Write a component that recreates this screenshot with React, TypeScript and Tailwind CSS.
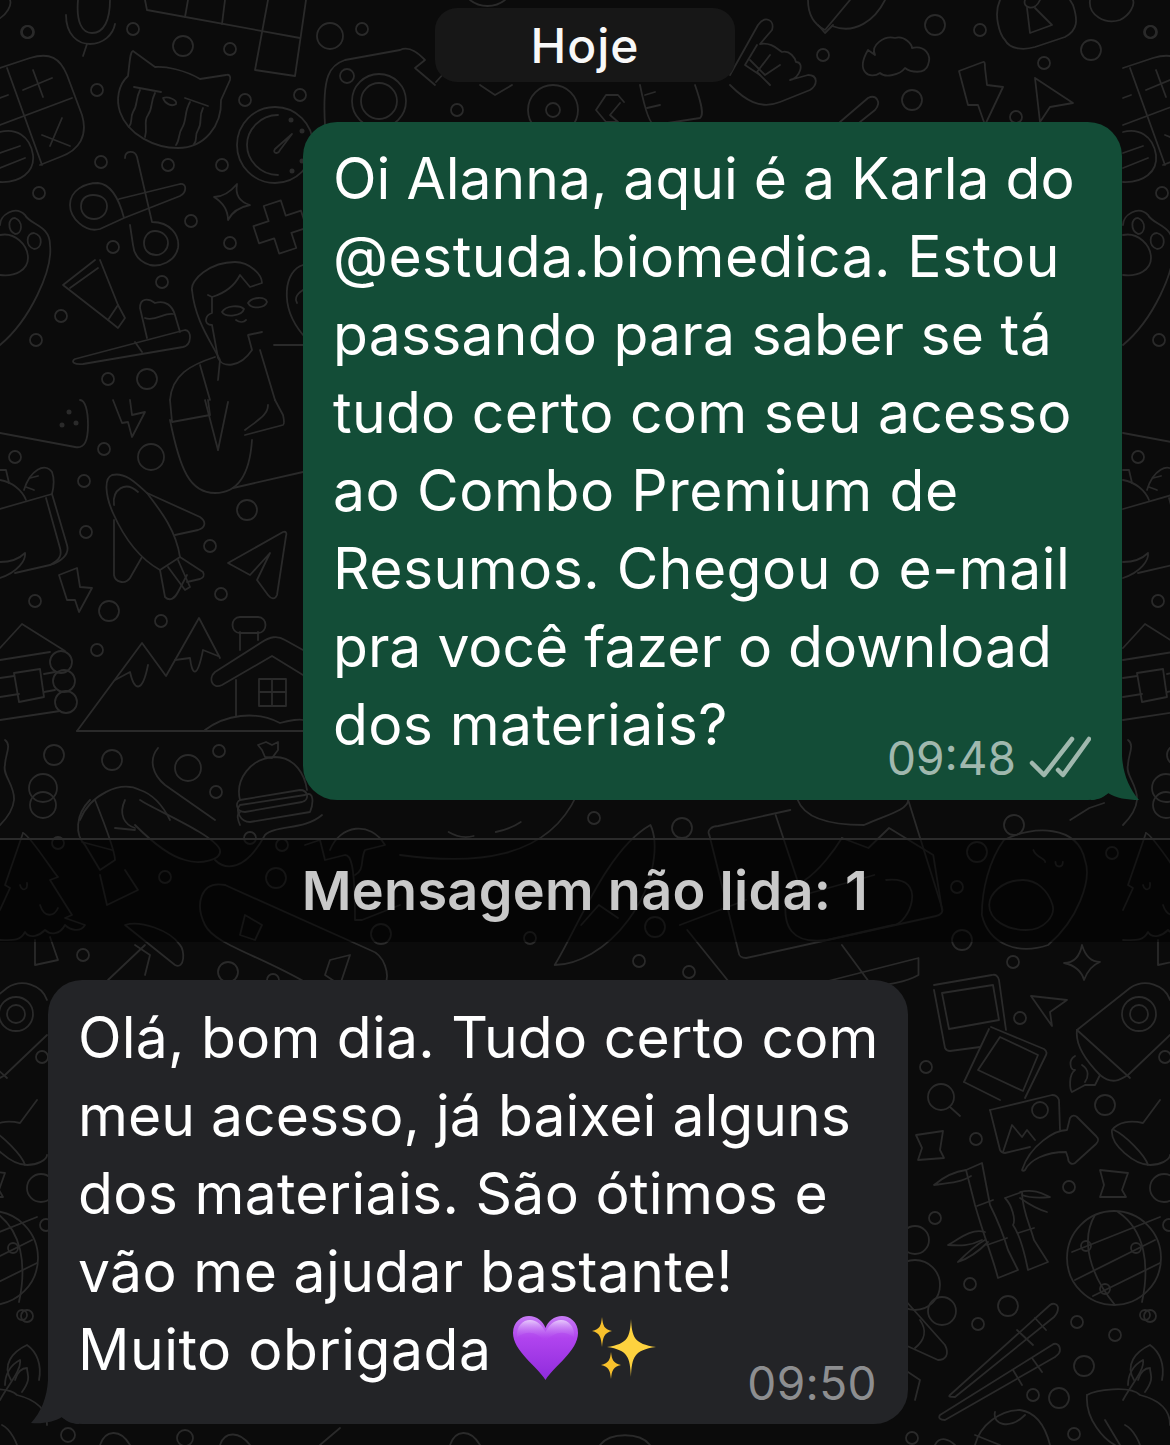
const circles: number[][] = [
  [28, 32, 6], [133, 29, 6], [183, 46, 10], [230, 49, 6], [97, 90, 6], [101, 162, 6], [39, 193, 6], [168, 165, 6], [222, 165, 6],
  [191, 221, 6], [113, 247, 6], [230, 243, 6], [245, 100, 6], [300, 95, 6], [162, 282, 6], [61, 316, 6], [36, 340, 6], [108, 379, 6], [147, 379, 10],
  [330, 36, 13], [362, 29, 6], [379, 101, 27], [379, 101, 18], [347, 76, 7], [457, 110, 6], [553, 110, 25], [553, 110, 7],
  [823, 55, 6], [935, 25, 10], [980, 30, 6], [912, 100, 10], [1016, 117, 6], [1091, 50, 10], [1044, 63, 6], [1150, 32, 6],
  [104, 449, 6], [151, 457, 13], [84, 481, 6], [86, 532, 6], [247, 510, 10], [210, 546, 6], [221, 594, 6], [35, 601, 6], [109, 611, 10],
  [161, 621, 6], [97, 650, 6], [54, 755, 10], [112, 760, 10], [219, 751, 6], [188, 768, 13], [216, 792, 6], [43, 788, 14], [15, 457, 6],
  [43, 805, 13], [58, 843, 6], [165, 877, 6], [276, 878, 10], [83, 955, 6], [228, 972, 10], [250, 838, 6], [282, 845, 6], [381, 934, 10], [273, 980, 6],
  [594, 818, 6], [682, 828, 10], [977, 852, 10], [1014, 825, 10], [1112, 853, 6], [957, 887, 6], [655, 927, 10], [530, 938, 6], [639, 961, 6], [689, 972, 6], [962, 940, 10],
  [1013, 962, 6], [1020, 1018, 6], [926, 1067, 6], [976, 1139, 6], [1069, 1187, 6], [935, 1218, 6], [970, 1284, 6], [1008, 1306, 10], [978, 1324, 6],
  [1077, 1322, 6], [1115, 1335, 6], [1150, 1316, 6], [1084, 1366, 10], [1033, 1395, 6], [1059, 1398, 10], [1074, 1434, 6], [912, 1438, 6],
  [1105, 1105, 10], [1164, 1188, 14], [1165, 1057, 6], [1169, 1225, 6], [941, 1097, 13], [1040, 1110, 8], [1139, 1014, 17], [1139, 1014, 9],
  [1114, 1258, 47], [1086, 1246, 5], [1136, 1248, 5], [1105, 1289, 5], [915, 1240, 14], [942, 1311, 14], [915, 1285, 25], [22, 1315, 5],
  [68, 1435, 7], [185, 1438, 8],
]

// drawn from a crop that was squeezed sideways, so this group gets stretched back on x
const bandPaths: string[] = [
  'M400 855 C450 865 500 860 520 795', 'M433 832 C440 838 445 838 450 836', 'M465 832 C472 830 478 826 482 822', 'M505 965 C520 930 540 850 570 825 C575 840 575 880 555 920 C540 950 520 965 505 965Z', 'M523 925 L535 905 L548 918', 'M590 925 L635 900', 'M595 930 L625 985',
  'M610 835 C608 830 612 826 616 826 L665 810', 'M745 800 L768 908 C769 912 767 915 764 916 L635 958 C632 958 630 956 630 953 L610 835', 'M655 815 L672 890', 'M670 800 C675 820 695 825 715 825 C730 815 745 810 745 800', 'M700 838 C695 850 685 870 675 880', 'M700 838 L718 848 L732 828 L762 855 L768 910',
  'M730 880 C760 875 745 925 735 925 L690 940 C665 945 660 925 662 900 L722 875', 'M700 945 L720 985', 'M680 985 L752 958 L752 975 C740 985 725 985 700 990',
  'M810 840 C830 825 860 825 865 860 C870 880 860 920 840 945 C820 955 800 945 795 915 C795 890 800 860 810 840', 'M823 880 C808 880 800 895 800 905 C800 920 812 930 825 930 C838 930 845 915 843 905 C840 890 832 880 823 880Z', 'M830 850 C832 858 838 858 838 862', 'M845 862 C845 868 850 868 850 862', 'M855 820 L868 808 L878 803',
]

const paths: string[] = [
  // mic, grid
  'M78 0 C76 22 82 33 92 33 C104 33 110 20 110 0', 'M66 15 C66 35 78 44 90 44 C103 44 113 35 115 24', 'M87 44 L83 56',
  'M145 0 L147 10 L300 38', 'M188 0 L185 17', 'M225 0 L222 24', 'M268 0 L255 70 L295 76 L306 0',
  // cat
  'M133 51 C130 52 130 60 128 76 C118 85 116 100 120 112 C128 135 155 148 178 148 C205 148 222 125 221 100 L230 80 C231 76 229 74 226 75 L200 79 C185 70 165 66 155 67 Z',
  'M134 87 L161 92', 'M185 98 L208 106', 'M140 90 C135 100 138 105 133 112 C130 118 133 122 129 127', 'M155 93 C150 103 153 108 148 115 C143 122 148 128 145 137',
  'M190 102 C184 112 187 120 182 128 C178 134 180 140 176 145', 'M203 108 C198 118 203 122 198 130 C194 136 198 140 194 144', 'M163 98 C168 96 178 100 176 104 C172 107 165 104 163 98',
  // calculator
  'M0 68 L30 58 C50 52 60 58 67 75 L82 115 C88 135 80 150 60 157 L40 165', 'M7 68 L42 165', 'M0 125 L72 98', 'M23 90 L52 78', 'M33 70 L43 97', 'M42 135 L70 146', 'M50 146 L62 118', 'M0 98 L8 95',
  'M0 132 C15 128 30 135 33 155 C35 172 20 183 0 182', 'M0 153 L20 146', 'M0 168 L25 158',
  // gauge
  'M278 115 C260 115 247 130 247 145 C247 160 260 175 278 175', 'M292 134 L275 149 C272 153 278 155 280 150 Z',
  // scissors
  'M119 199 L180 184 C187 183 187 192 180 196 L124 218 L100 229 C85 233 70 218 70 205 C70 190 85 183 98 183 C110 184 118 195 124 218', 'M125 158 C125 150 135 150 137 157 L152 222 C170 222 180 235 178 248 C175 262 160 267 150 265 C140 262 134 255 133 245 L130 225',
  'M93 195 C85 195 81 200 81 206 C81 214 87 219 94 219 C102 219 107 213 107 206 C107 199 101 195 93 195Z', 'M155 231 C148 231 144 237 144 243 C144 251 150 255 156 255 C163 255 168 249 168 243 C168 236 162 231 155 231Z',
  'M214 197 C225 197 232 190 237 184 C235 195 240 202 250 205 C240 207 232 212 228 220 C228 210 222 202 214 197Z',
  // paw
  'M0 225 C0 215 15 205 25 215 C30 225 50 225 50 245 C53 270 30 320 0 345', 'M15 218 C8 218 7 230 15 234 C22 234 24 222 15 218Z', 'M34 233 C26 233 25 246 34 249 C42 249 44 236 34 233Z', 'M0 235 C15 232 28 245 28 258 C28 270 15 277 0 275',
  // tube, brush
  'M95 260 L63 285 L108 320 L118 305 L100 260', 'M70 288 L98 268', 'M108 320 L118 328 L125 318 L118 305',
  'M75 359 L185 330 C192 330 192 345 183 347 L83 364 C75 365 70 362 75 359Z', 'M135 342 L142 352', 'M147 338 L140 308 C140 298 148 298 155 303 C165 300 172 305 175 315 L180 332', 'M145 318 C155 322 165 312 173 314',
  // person
  'M192 290 C190 280 210 262 235 262 C250 262 262 275 262 283 L250 287 L240 275 C235 285 225 293 212 297 L208 295', 'M192 290 C195 320 210 340 220 360 L218 380',
  'M212 297 L212 313 C205 315 203 325 212 325 L218 358 C222 368 240 368 252 350 L248 335 L262 332', 'M222 312 C226 305 240 305 244 309 C242 316 226 318 222 312Z', 'M248 303 C252 297 265 296 267 302 C265 308 252 310 248 303Z', 'M236 320 C240 323 244 322 246 320',
  'M215 357 C190 365 172 375 170 400', 'M200 365 L210 400', 'M260 350 L275 400', 'M274 345 L303 345', 'M303 265 C285 270 278 305 303 335', 'M303 290 C295 295 295 300 297 303',
  // top middle
  'M325 125 C322 75 330 65 345 60 L400 50 C410 45 420 55 425 60 L415 68 L435 85', 'M436 82 L445 72', 'M480 85 L495 95 L512 85', 'M620 103 L610 115 L618 122 L606 122 L596 110 L606 95 L618 95 L624 102',
  'M640 85 C645 110 650 125 655 125 L700 118 C704 115 702 105 695 85', 'M645 95 L655 92', 'M647 108 L660 105', 'M470 0 C480 8 495 8 505 0',
  // shaka, balloon, cloud, lock
  'M730 75 L758 25 C765 15 775 20 772 30 L760 44 C772 42 778 50 782 52 C790 50 795 58 796 62 C805 62 800 78 790 80 L808 75 C818 75 818 85 810 90 L780 102 C760 110 745 100 730 85', 'M750 60 L765 75 L780 65', 'M757 45 L745 65 L760 75', 'M770 55 L757 72 L770 85',
  'M808 0 C808 15 815 25 825 30 L850 0', 'M818 25 L825 33 L833 25', 'M832 26 C855 35 875 20 885 0',
  'M875 55 C870 45 885 35 895 38 C905 35 912 45 912 48 C925 45 932 55 928 65 C925 75 910 72 905 68 C900 75 885 78 880 73 C870 80 855 72 868 50 Z',
  'M1000 0 C993 15 1000 35 1005 40 C1010 50 1025 50 1035 47 L1065 37 C1078 30 1078 20 1073 5 L1070 0', 'M1027 8 L1030 33 L1052 25 L1035 8', 'M1025 0 C1022 8 1035 12 1040 0',
  'M1090 0 C1088 15 1105 25 1120 20 C1130 15 1135 5 1133 0',
  'M959 71 L983 62 C985 61 985 65 985 68 L987 85 L1003 87 L985 125 L978 105 L968 105 Z', 'M1035 78 L1073 103 L1050 107 L1040 122 Z',
  'M840 122 L868 98 C876 94 882 102 875 110 L860 122',
  // row 400-800
  'M0 433 L75 447 C85 449 88 440 88 425 C88 410 85 400 80 400', 'M113 400 L122 423 L128 422 L132 437 L145 412 L132 415 L130 400',
  'M112 475 C104 478 105 495 113 513 C125 540 142 560 160 570 L180 557 C176 530 160 510 147 493 C135 482 125 472 112 475Z', 'M114 505 C112 490 125 480 138 492', 'M147 493 L200 517 C207 522 205 528 198 530 L175 535', 'M114 520 L114 575 C115 582 125 585 130 578 L142 557',
  'M160 570 L165 597 C170 602 175 598 178 592 L187 575', 'M168 567 L185 590 L190 587 L178 560', 'M180 557 L203 572 C205 576 203 578 200 579 L187 582',
  'M228 563 L283 532 C286 531 287 533 286 536 L277 595 C275 600 271 599 268 595 L257 580 L270 553 L250 575 Z', 'M59 575 L77 568 L80 587 L92 588 L79 612 L75 600 L67 600 Z',
  'M77 731 L142 643 L166 676 L199 618 L220 658', 'M77 731 L303 731', 'M115 680 L130 672 C134 690 142 695 148 665', 'M175 660 L190 658 C192 675 197 680 203 650 L218 656',
  'M303 650 L285 640 C277 635 270 637 262 642 L215 672 C208 678 212 690 222 685 L272 656 L303 675', 'M236 680 L236 716', 'M259 679 H286 V706 H259 Z', 'M272 679 V706', 'M259 692 H286', 'M240 650 L240 632', 'M258 640 L258 632',
  'M240 617 H258 C268 617 268 633 258 633 H240 C230 633 230 617 240 617Z', 'M205 730 C225 715 255 710 280 723 C290 720 300 719 303 720',
  'M0 648 L22 624 L65 651', 'M0 660 L50 652', 'M0 720 L60 711', 'M14 673 L40 669 L44 697 L19 702 Z', 'M0 678 L14 676', 'M0 697 L19 694', 'M44 674 L55 672', 'M44 692 L55 690',
  'M61 651 C55 651 50 656 50 662 C50 668 55 673 61 673 C67 673 72 668 72 662 C72 656 67 651 61 651Z', 'M64 670 C58 670 53 675 53 681 C53 687 58 692 64 692 C70 692 75 687 75 681 C75 675 70 670 64 670Z', 'M66 691 C60 691 55 696 55 702 C55 708 60 713 66 713 C72 713 77 708 77 702 C77 696 72 691 66 691Z',
  'M0 509 L52 494 L67 545 C70 555 60 562 50 565 L15 573', 'M46 498 L60 548 C62 555 60 560 50 565', 'M24 490 C30 470 45 462 52 472 C55 480 53 490 52 494', 'M30 478 L38 476', 'M26 487 L34 490', 'M0 562 C12 562 20 558 25 553 C26 560 18 572 0 578', 'M0 480 C12 482 22 490 26 500', 'M0 470 L6 470 L9 483',
  'M170 420 C180 470 190 493 215 493 C240 493 250 470 252 440', 'M170 400 L172 422 L210 415 L208 400', 'M218 450 L228 402', 'M218 450 L205 400', 'M245 435 L283 425 C285 424 284 420 283 415 L275 400', 'M233 488 L303 472', 'M245 430 C258 420 268 415 268 405',
  'M240 800 C235 780 250 758 275 757 C295 757 305 775 307 790', 'M240 800 L300 790 C308 790 310 800 302 802 L245 812 C236 812 235 802 240 800Z', 'M240 812 C236 815 238 820 240 825', 'M262 750 L258 745 L266 742 L272 745 L278 742 L278 750 L272 758 L265 757 Z',
  'M80 820 C90 795 120 780 140 790 C155 795 165 810 170 820', 'M158 748 C148 760 153 775 165 785 L215 820', 'M5 740 C12 745 5 755 5 765 C2 775 15 785 14 800 C13 810 5 820 0 825',
  // band left
  'M23 833 C30 835 55 875 58 877 L50 880 L72 915 L65 918 L85 925 C80 933 70 930 65 925 C60 935 50 935 45 930 C40 935 30 940 25 932 C20 942 10 940 0 940', 'M23 833 L5 885 L10 888 L0 910', 'M35 940 L35 965 L58 960 L50 937', 'M20 885 C22 892 28 890 27 883', 'M40 905 C45 920 55 915 58 908',
  'M90 800 C75 815 75 835 85 845 L100 870 L115 860 C115 850 95 800 95 800', 'M100 875 L107 905 L138 890 L125 870', 'M82 842 L112 850', 'M115 828 L135 830', 'M125 800 C118 815 125 825 135 828',
  'M225 885 C200 880 195 905 205 925 C215 945 260 955 310 985', 'M225 885 L370 950 C385 955 390 975 385 985', 'M245 915 L262 925 L255 940 L240 935 Z', 'M330 960 L350 955 L340 985 L325 975 Z',
  'M140 800 C155 810 215 835 220 850 C222 860 200 865 185 860 C165 855 140 830 135 825', 'M215 860 C225 870 245 872 265 835 C275 825 305 830 322 815', 'M240 805 L305 795 C315 790 313 805 310 812 L250 822 C240 822 235 810 240 805Z',
  'M125 925 L175 965 C185 970 185 950 180 945 C170 930 140 920 125 925Z', 'M135 945 L150 955 L145 975', 'M108 980 L145 945',
  'M305 845 L320 840 L325 860 L345 855 C350 855 355 860 355 920 L362 920 L400 905', 'M330 850 C340 825 370 820 385 845 L365 850 C360 860 365 870 355 875',
  // right side
  'M1064 963 C1075 963 1080 955 1082 945 C1085 955 1090 962 1100 962 C1092 965 1087 972 1084 980 C1082 972 1075 965 1064 963Z',
  'M934 985 L992 975 C996 974 998 976 999 980 L1006 1030', 'M934 990 L945 1048 C946 1050 948 1051 950 1051 L980 1047', 'M942 993 L993 985 L999 1020 L949 1029 Z',
  'M991 1027 L1044 1049 C1047 1051 1047 1053 1046 1055 L1025 1098', 'M964 1082 L989 1029', 'M964 1082 L1000 1100', 'M1000 1037 L1038 1055 L1023 1091 L978 1070 Z',
  'M990 1110 L1052 1095 C1056 1095 1058 1097 1059 1100 L1060 1130', 'M990 1110 L1000 1150 C1001 1152 1003 1153 1005 1153 L1030 1147', 'M1003 1152 L1012 1125 L1022 1137 L1027 1130 L1035 1140',
  'M1022 1170 C1030 1145 1055 1130 1067 1130 L1070 1118 C1072 1115 1075 1115 1077 1117 L1096 1136 C1099 1139 1099 1141 1096 1144 L1075 1163 C1072 1165 1068 1163 1068 1158 L1066 1152 C1045 1152 1030 1160 1025 1170 C1024 1171 1022 1171 1022 1170Z',
  'M1077 1030 L1130 988 C1145 978 1165 985 1170 1000', 'M1077 1030 C1075 1045 1085 1060 1100 1075 C1112 1085 1120 1080 1128 1075 L1170 1035', 'M1077 1030 L1130 1078',
  'M1075 1056 C1068 1060 1070 1070 1075 1070 C1068 1075 1070 1090 1072 1092 L1085 1085 L1095 1085 L1100 1075', 'M1082 1065 C1090 1070 1088 1078 1085 1082',
  'M1031 996 L1067 1000 L1050 1012 L1052 1026 Z', 'M950 1107 L960 1116', 'M916 1135 L943 1131 L940 1150 L944 1158 L918 1160 L922 1148 Z', 'M1100 1170 L1128 1173 L1122 1190 L1126 1197 L1100 1197 L1104 1185 Z',
  'M1160 1100 L1143 1123 C1130 1120 1118 1122 1112 1130 C1110 1145 1135 1165 1150 1165 C1160 1165 1170 1160 1170 1155', 'M1114 1130 C1125 1135 1145 1155 1148 1165',
  // bamboo
  'M966 1170 L982 1163 L990 1205 C1000 1225 1005 1240 1008 1250 L1018 1270 L998 1278 C992 1255 985 1240 975 1205 Z', 'M977 1206 L993 1200', 'M987 1245 L1007 1238', 'M966 1170 C950 1172 940 1180 934 1185 C950 1183 962 1182 971 1176',
  'M1005 1198 L1022 1192 C1022 1210 1030 1225 1034 1240 L1048 1262 L1028 1270 C1024 1250 1020 1235 1013 1225 C1016 1220 1012 1205 1005 1198Z', 'M1018 1233 L1034 1228', 'M1020 1192 C1035 1188 1045 1195 1050 1197 C1040 1198 1030 1198 1022 1195', 'M1020 1198 C1030 1205 1040 1210 1047 1212',
  'M985 1232 C970 1228 958 1240 948 1245 C960 1246 970 1246 982 1240', 'M985 1240 C975 1245 965 1255 958 1262 C970 1258 980 1250 988 1242',
  // globe
  'M1072 1252 L1160 1217', 'M1075 1280 L1155 1240', 'M1093 1296 L1160 1263', 'M1095 1215 C1080 1240 1090 1275 1115 1305', 'M1118 1212 C1145 1230 1150 1265 1142 1302',
  // chopsticks
  'M950 1395 L1050 1305 C1054 1302 1058 1305 1058 1308 C1058 1312 1056 1315 1054 1317 L955 1397 C950 1397 948 1397 950 1395Z', 'M1017 1330 L1033 1345', 'M1035 1318 L1046 1330', 'M940 1415 L1052 1345 C1056 1342 1060 1345 1060 1350 C1060 1354 1057 1355 1055 1357 L945 1420 C940 1420 938 1418 940 1415Z', 'M1013 1370 L1022 1385', 'M1032 1358 L1042 1372',
  // candle, flowers
  'M1134 1380 C1125 1365 1135 1352 1150 1345 C1160 1352 1165 1365 1162 1380', 'M1138 1380 C1140 1372 1145 1368 1150 1368 C1150 1375 1155 1378 1145 1392', 'M1087 1395 C1095 1390 1130 1385 1140 1395 C1160 1400 1170 1410 1170 1425', 'M1087 1395 C1085 1420 1105 1440 1115 1445', 'M1105 1420 L1120 1445', 'M1125 1425 C1135 1430 1140 1445 1140 1445',
  'M975 1445 C980 1425 1000 1410 1020 1410 C1035 1412 1045 1425 1050 1445', 'M995 1412 C992 1425 1010 1430 1025 1415', 'M975 1435 L1000 1445', 'M935 1445 C940 1435 950 1440 955 1445',
  'M905 1370 L920 1380 L915 1400', 'M905 1300 L945 1345 C950 1355 945 1360 938 1360 L905 1345', 'M920 1320 C927 1330 925 1340 915 1348',
  'M0 1400 C8 1385 22 1370 20 1360 C10 1365 5 1375 5 1385', 'M100 1445 C105 1430 120 1428 130 1445', 'M220 1445 C225 1430 240 1432 250 1445', 'M320 1445 L340 1428', 'M450 1445 C455 1430 470 1428 480 1445', 'M600 1445 C610 1432 640 1432 650 1445',
]

const Doodles = () => (
  <g>
    {circles.map(([cx, cy, r], i) => (
      <circle key={i} cx={cx} cy={cy} r={r} />
    ))}
    {paths.map((d, i) => (
      <path key={i} d={d} />
    ))}
    <g transform="translate(400 0) scale(1.473 1) translate(-400 0)">
      {bandPaths.map((d, i) => (
        <path key={i} d={d} vectorEffect="non-scaling-stroke" />
      ))}
    </g>
    <path d="M-9 -25h18v16h16v18h-16v16h-18v-16h-16v-18h16z" transform="translate(280 227) rotate(-18)" />
    {[[291, 120], [302, 131], [302, 161], [292, 171], [69, 412], [62, 425], [76, 423]].map(([cx, cy], i) => (
      <circle key={i} cx={cx} cy={cy} r={2.5} fill="#2a2a2a" stroke="none" />
    ))}
    <path d="M275 107 C296 107 313 124 313 145 C313 166 296 183 275 183 C254 183 237 166 237 145 C237 124 254 107 275 107Z" />
  </g>
)

const Wallpaper = () => (
  <svg className="absolute inset-0 h-full w-full fill-none stroke-[#2a2a2a] stroke-[1.8]" viewBox="0 0 1170 1445" strokeLinecap="round" strokeLinejoin="round">
    <g transform="translate(-1123 0)"><Doodles /></g>
    <Doodles />
    <g transform="translate(1123 0)"><Doodles /></g>
  </svg>
)

const Heart = () => (
  <svg className="ml-[21px] mt-[4px] h-[66px] w-[67px] shrink-0" viewBox="0 0 67 66">
    <defs>
      <linearGradient id="heart" x1="0" y1="0" x2="0" y2="1">
        <stop offset="0" stopColor="#c77bf5" />
        <stop offset="0.35" stopColor="#b044ee" />
        <stop offset="1" stopColor="#8f2bdc" />
      </linearGradient>
      <linearGradient id="shine" x1="0" y1="0" x2="0" y2="1">
        <stop offset="0" stopColor="#e6c8fc" />
        <stop offset="1" stopColor="#b044ee" stopOpacity="0" />
      </linearGradient>
    </defs>
    <path d="M33.5 65 C25 51 1 36 1 18 C1 7 9 1 17 1 C25 1 31 6 33.5 13 C36 6 42 1 50 1 C58 1 66 7 66 18 C66 36 42 51 33.5 65Z" fill="url(#heart)" />
    <path d="M5 22 C4 11 11 5 18 5 C25 5 30 10 33.5 17 C37 10 42 5 49 5 C56 5 63 11 62 22 C50 14 42 18 33.5 26 C25 18 17 14 5 22Z" fill="url(#shine)" />
  </svg>
)

const Sparkles = () => (
  <svg className="ml-[11px] mt-[6px] h-[64px] w-[66px] shrink-0" viewBox="0 0 66 64">
    <path d="M41 2 C42 20 44 27 66 30 C44 33 42 40 41 60 C40 40 38 33 17 30 C38 27 40 20 41 2Z" fill="#fdd23f" />
    <path d="M12 0 C13 9 14 12 22 14 C14 16 13 20 12 30 C11 20 10 16 2 14 C10 12 11 9 12 0Z" fill="#f7c02c" />
    <path d="M21 35 C22 43 23 46 31 48 C23 50 22 53 21 62 C20 53 19 50 11 48 C19 46 20 43 21 35Z" fill="#f7c02c" />
  </svg>
)

const sentLines = [
  { text: 'Oi Alanna, aqui é a Karla do', track: 'tracking-[0px]' },
  { text: '@estuda.biomedica. Estou', track: 'tracking-[0.42px]' },
  { text: 'passando para saber se tá', track: 'tracking-[0.22px]' },
  { text: 'tudo certo com seu acesso', track: 'tracking-[0.28px]' },
  { text: 'ao Combo Premium de', track: 'tracking-[0.58px]' },
  { text: 'Resumos. Chegou o e-mail', track: 'tracking-[0.46px]' },
  { text: 'pra você fazer o download', track: 'tracking-[0px]' },
  { text: 'dos materiais?', track: 'tracking-[0.36px]' },
]

const receivedLines = [
  { text: 'Olá, bom dia. Tudo certo com', track: 'tracking-[0.22px]' },
  { text: 'meu acesso, já baixei alguns', track: 'tracking-[0.04px]' },
  { text: 'dos materiais. São ótimos e', track: 'tracking-[0.3px]' },
  { text: 'vão me ajudar bastante!', track: 'tracking-[0.35px]' },
]

const App = () => {
  return (
    <div className="relative h-[1445px] overflow-hidden bg-[#0b0b0b] font-[Inter,'Noto_Sans',sans-serif] text-white">
      <Wallpaper />
      <div className="relative flex flex-col">
        <div className="mt-2 flex h-[74px] w-[300px] items-center justify-center self-center rounded-[22px] bg-[#171717] pt-[2px] text-[48px] font-medium tracking-[1px] text-[#f8f8f8]">
          Hoje
        </div>

        <div className="relative ml-[303px] mt-10 h-[678px] w-[819px] rounded-[34px] bg-[#134d37] pl-[30px] pt-[18px] text-[57px] leading-[78px]">
          {sentLines.map((line) => (
            <div key={line.text} className={`whitespace-nowrap ${line.track}`}>{line.text}</div>
          ))}
          <div className="-mt-[31px] flex items-center justify-end gap-[13px] pr-[31px] text-[46px] leading-[50px] tracking-[0px] text-[#a0b8ae]">
            <span>09:48</span>
            <svg className="h-[44px] w-[62px] fill-none stroke-[#a0b8ae] stroke-[4.5]" viewBox="0 0 62 44" strokeLinecap="round" strokeLinejoin="round">
              <path d="M3 27 L15 39 L43 3" />
              <path d="M29 34 L34 39 L60 3" />
            </svg>
          </div>
          <svg className="absolute -right-[17px] bottom-0 h-[44px] w-[48px] fill-[#134d37]" viewBox="0 0 48 44">
            <path d="M0 44 L0 0 L31 0 C32 18 38 32 48 44 C36 44 25 42 17 37 C12 42 6 44 0 44Z" />
          </svg>
        </div>

        <div className="mt-[38px] flex h-[104px] items-center justify-center border-t-2 border-[#2b2b2b] bg-black/50 pb-[2px] text-[54px] font-semibold tracking-[0.3px] text-[#c9c9c9]">
          Mensagem não lida: 1
        </div>

        <div className="relative ml-[48px] mt-[38px] h-[444px] w-[860px] rounded-[34px] bg-[#232427] pl-[30px] pt-[19px] text-[57px] leading-[78px]">
          {receivedLines.map((line) => (
            <div key={line.text} className={`whitespace-nowrap ${line.track}`}>{line.text}</div>
          ))}
          <div className="flex h-[78px] items-start">
            <span className="whitespace-nowrap tracking-[0.5px]">Muito obrigada</span>
            <Heart />
            <Sparkles />
          </div>
          <div className="-mt-[31px] pr-[31px] text-right text-[46px] leading-[50px] tracking-[0.4px] text-[#8d8e90]">09:50</div>
          <svg className="absolute -left-[17px] bottom-0 h-[44px] w-[48px] fill-[#232427]" viewBox="0 0 48 44">
            <path d="M48 44 L48 0 L17 0 C16 18 10 32 0 43 C12 44 23 42 31 37 C36 42 42 44 48 44Z" />
          </svg>
        </div>
      </div>
    </div>
  )
}

export default App
